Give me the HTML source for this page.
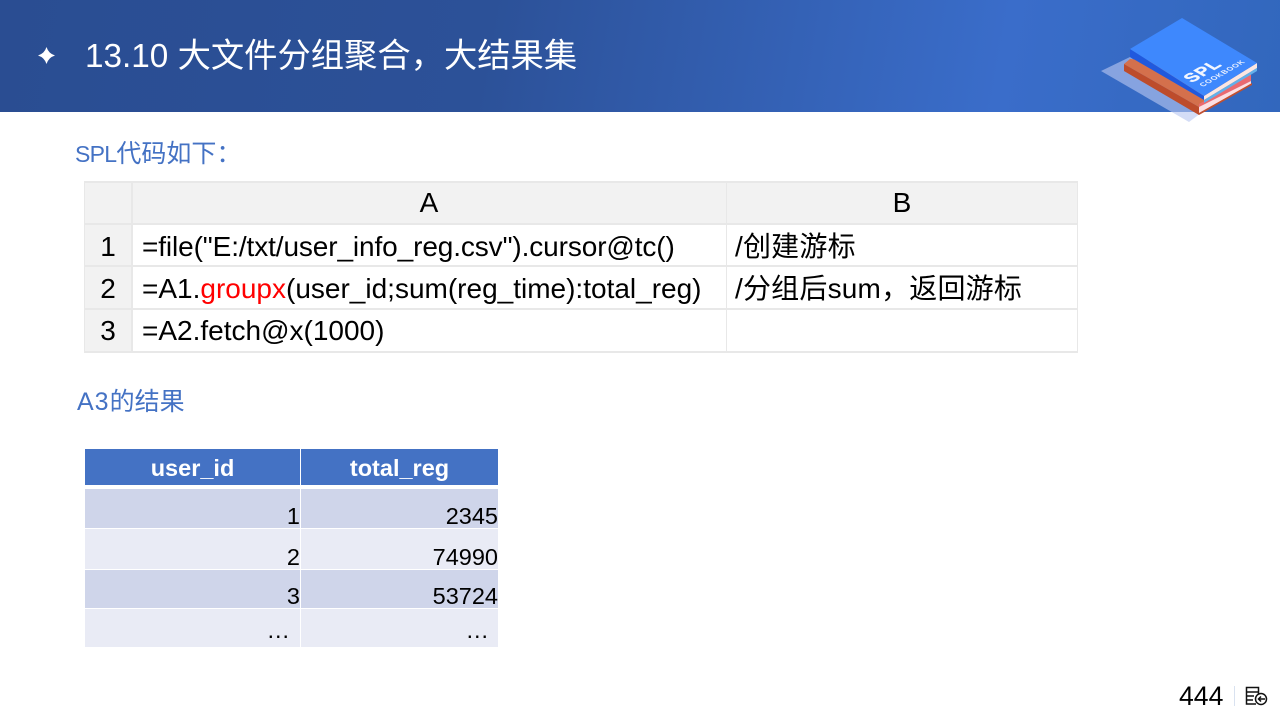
<!DOCTYPE html>
<html lang="zh"><head><meta charset="utf-8"><title>13.10</title>
<style>
html,body{margin:0;padding:0;background:#fff}
#p{position:relative;width:1280px;height:720px;overflow:hidden;background:#fff;font-family:"Liberation Sans","Noto Sans CJK SC",sans-serif;color:#000}
#p div{position:absolute;white-space:nowrap}
.hd{left:0;top:0;width:1280px;height:112px;background:linear-gradient(100deg,#2a4d92 0%,#2c5198 38%,#3a6dca 78%,#3267bd 100%)}
.ttl{left:85px;top:33px;font-size:33.3px;line-height:48px;color:#fff;font-family:"Liberation Sans","Noto Sans CJK SC",sans-serif}
.sub{font-family:"Liberation Sans","Noto Sans CJK SC",sans-serif;color:#4472c4;font-size:25px;line-height:34px}
.c{font-size:28px;line-height:42px;height:42px}
.g{background:#f2f2f2}
.ln{background:#e8e8e8}
.t2{font-size:23.5px;line-height:30px}
.h{color:#fff;font-weight:bold;font-size:23.5px;text-align:center;line-height:38px;top:449px;height:36px;background:#4472c4}
.r{text-align:right}
</style></head><body><div id="p">
<div class="hd"></div>
<svg style="position:absolute;left:0;top:0" width="1280" height="130" viewBox="0 0 1280 130">
<path d="M46.5 47 Q48.5 53.500 55 55.500 Q48.5 57.500 46.5 64 Q44.5 57.500 38 55.500 Q44.5 53.500 46.5 47Z" fill="#fff"/>
<path d="M1101 71L1130 57L1205 110L1189 122Z" fill="#b8c7f0" fill-opacity=".62"/>
<path d="M1130 59L1124 64L1199 107L1251 76L1251 70Z" fill="#d4704c"/>
<path d="M1124 64L1124 71L1199 115L1199 107Z" fill="#bd4c2b"/>
<path d="M1199 104L1251 74L1251 81L1199 108Z" fill="#ea6a70"/>
<path d="M1199 107L1251 81L1251 85L1199 113Z" fill="#fcdfe3"/>
<path d="M1199 113L1252 83L1252 85L1199 115Z" fill="#c2502f"/>
<path d="M1130 49L1130 57L1204 100L1204 96Z" fill="#2059de"/>
<path d="M1204 96L1257 63L1257 68L1204 100Z" fill="#fbe6e2"/>
<path d="M1204 100L1257 68L1257 71L1204 103Z" fill="#62b0ea"/>
<path d="M1182 18L1130 49L1204 96L1257 63Z" fill="#3e88fd"/>
<text transform="matrix(.86 -.5 .86 .5 1192 83)" font-family="Liberation Sans" font-weight="bold" font-size="17" letter-spacing="1" stroke="#f2f6ff" stroke-width=".5" fill="#f2f6ff">SPL</text>
<text transform="matrix(.86 -.5 .86 .5 1203 87)" font-family="Liberation Sans" font-weight="bold" font-size="7.500" letter-spacing=".6" fill="#e6eeff">COOKBOOK</text>
</svg>
<div class="ttl">13.10 大文件分组聚合，大结果集</div>
<div class="sub" style="left:75px;top:137px"><span style="font-size:23px;letter-spacing:-.7px">SPL</span>代码如下：</div>

<div class="g" style="left:84px;top:181px;width:994px;height:42px"></div>
<div class="g" style="left:84px;top:223px;width:47px;height:129px"></div>
<div class="ln" style="left:84px;top:181px;width:994px;height:2px"></div>
<div class="ln" style="left:84px;top:223px;width:994px;height:2px"></div>
<div class="ln" style="left:84px;top:265px;width:994px;height:2px"></div>
<div class="ln" style="left:84px;top:308px;width:994px;height:2px"></div>
<div class="ln" style="left:84px;top:351px;width:994px;height:2px"></div>
<div class="ln" style="left:84px;top:181px;width:1px;height:172px"></div>
<div class="ln" style="left:131px;top:181px;width:2px;height:172px"></div>
<div class="ln" style="left:726px;top:181px;width:1px;height:172px"></div>
<div class="ln" style="left:1077px;top:181px;width:1px;height:172px"></div>

<div class="c" style="left:132px;width:594px;top:182px;text-align:center">A</div>
<div class="c" style="left:727px;width:350px;top:182px;text-align:center">B</div>
<div class="c" style="left:85px;width:46px;top:226px;text-align:center">1</div>
<div class="c" style="left:85px;width:46px;top:268px;text-align:center">2</div>
<div class="c" style="left:85px;width:46px;top:310px;text-align:center">3</div>
<div class="c" style="left:142px;top:226px;letter-spacing:-.11px">=file("E:/txt/user_info_reg.csv").cursor@tc()</div>
<div class="c" style="left:142px;top:268px">=A1.<span style="color:#f00">groupx</span>(user_id;sum(reg_time):total_reg)</div>
<div class="c" style="left:142px;top:310px">=A2.fetch@x(1000)</div>
<div class="c" style="left:735px;top:226px;letter-spacing:.2px">/创建游标</div>
<div class="c" style="left:735px;top:268px;letter-spacing:.2px">/分组后sum，返回游标</div>

<div class="sub" style="left:77px;top:385px"><span style="letter-spacing:1px">A3</span>的结果</div>

<div class="h" style="left:85px;width:215px">user_id</div>
<div class="h" style="left:301px;width:197px">total_reg</div>
<div style="left:85px;top:489px;width:215px;height:39px;background:#cfd5ea"></div>
<div style="left:301px;top:489px;width:197px;height:39px;background:#cfd5ea"></div>
<div style="left:85px;top:529px;width:215px;height:40px;background:#e9ebf5"></div>
<div style="left:301px;top:529px;width:197px;height:40px;background:#e9ebf5"></div>
<div style="left:85px;top:570px;width:215px;height:38px;background:#cfd5ea"></div>
<div style="left:301px;top:570px;width:197px;height:38px;background:#cfd5ea"></div>
<div style="left:85px;top:609px;width:215px;height:38px;background:#e9ebf5"></div>
<div style="left:301px;top:609px;width:197px;height:38px;background:#e9ebf5"></div>

<div class="t2 r" style="left:85px;width:215px;top:501px">1</div>
<div class="t2 r" style="left:301px;width:197px;top:501px">2345</div>
<div class="t2 r" style="left:85px;width:215px;top:542px">2</div>
<div class="t2 r" style="left:301px;width:197px;top:542px">74990</div>
<div class="t2 r" style="left:85px;width:215px;top:581px">3</div>
<div class="t2 r" style="left:301px;width:197px;top:581px">53724</div>
<div class="t2 r" style="left:85px;width:205px;top:615px">…</div>
<div class="t2 r" style="left:301px;width:188px;top:615px">…</div>

<div style="left:1179px;top:679px;font-size:26.6px;line-height:34px">444</div>
<div style="left:1234px;top:686px;width:1px;height:20px;background:#d9e2f0"></div>
<svg style="position:absolute;left:1244px;top:686px" width="24" height="22" viewBox="0 0 24 22" fill="none" stroke="#111" stroke-width="1.500">
<path d="M12 18H2.500V1.500H14.500V8"/>
<path d="M2.500 6H14M2.500 10H10M2.500 14H9"/>
<circle cx="17" cy="13" r="5.500" fill="#fff"/>
<path d="M21 13H14.500M17 10.500L14.500 13L17 15.500"/>
</svg>
</div></body></html>
